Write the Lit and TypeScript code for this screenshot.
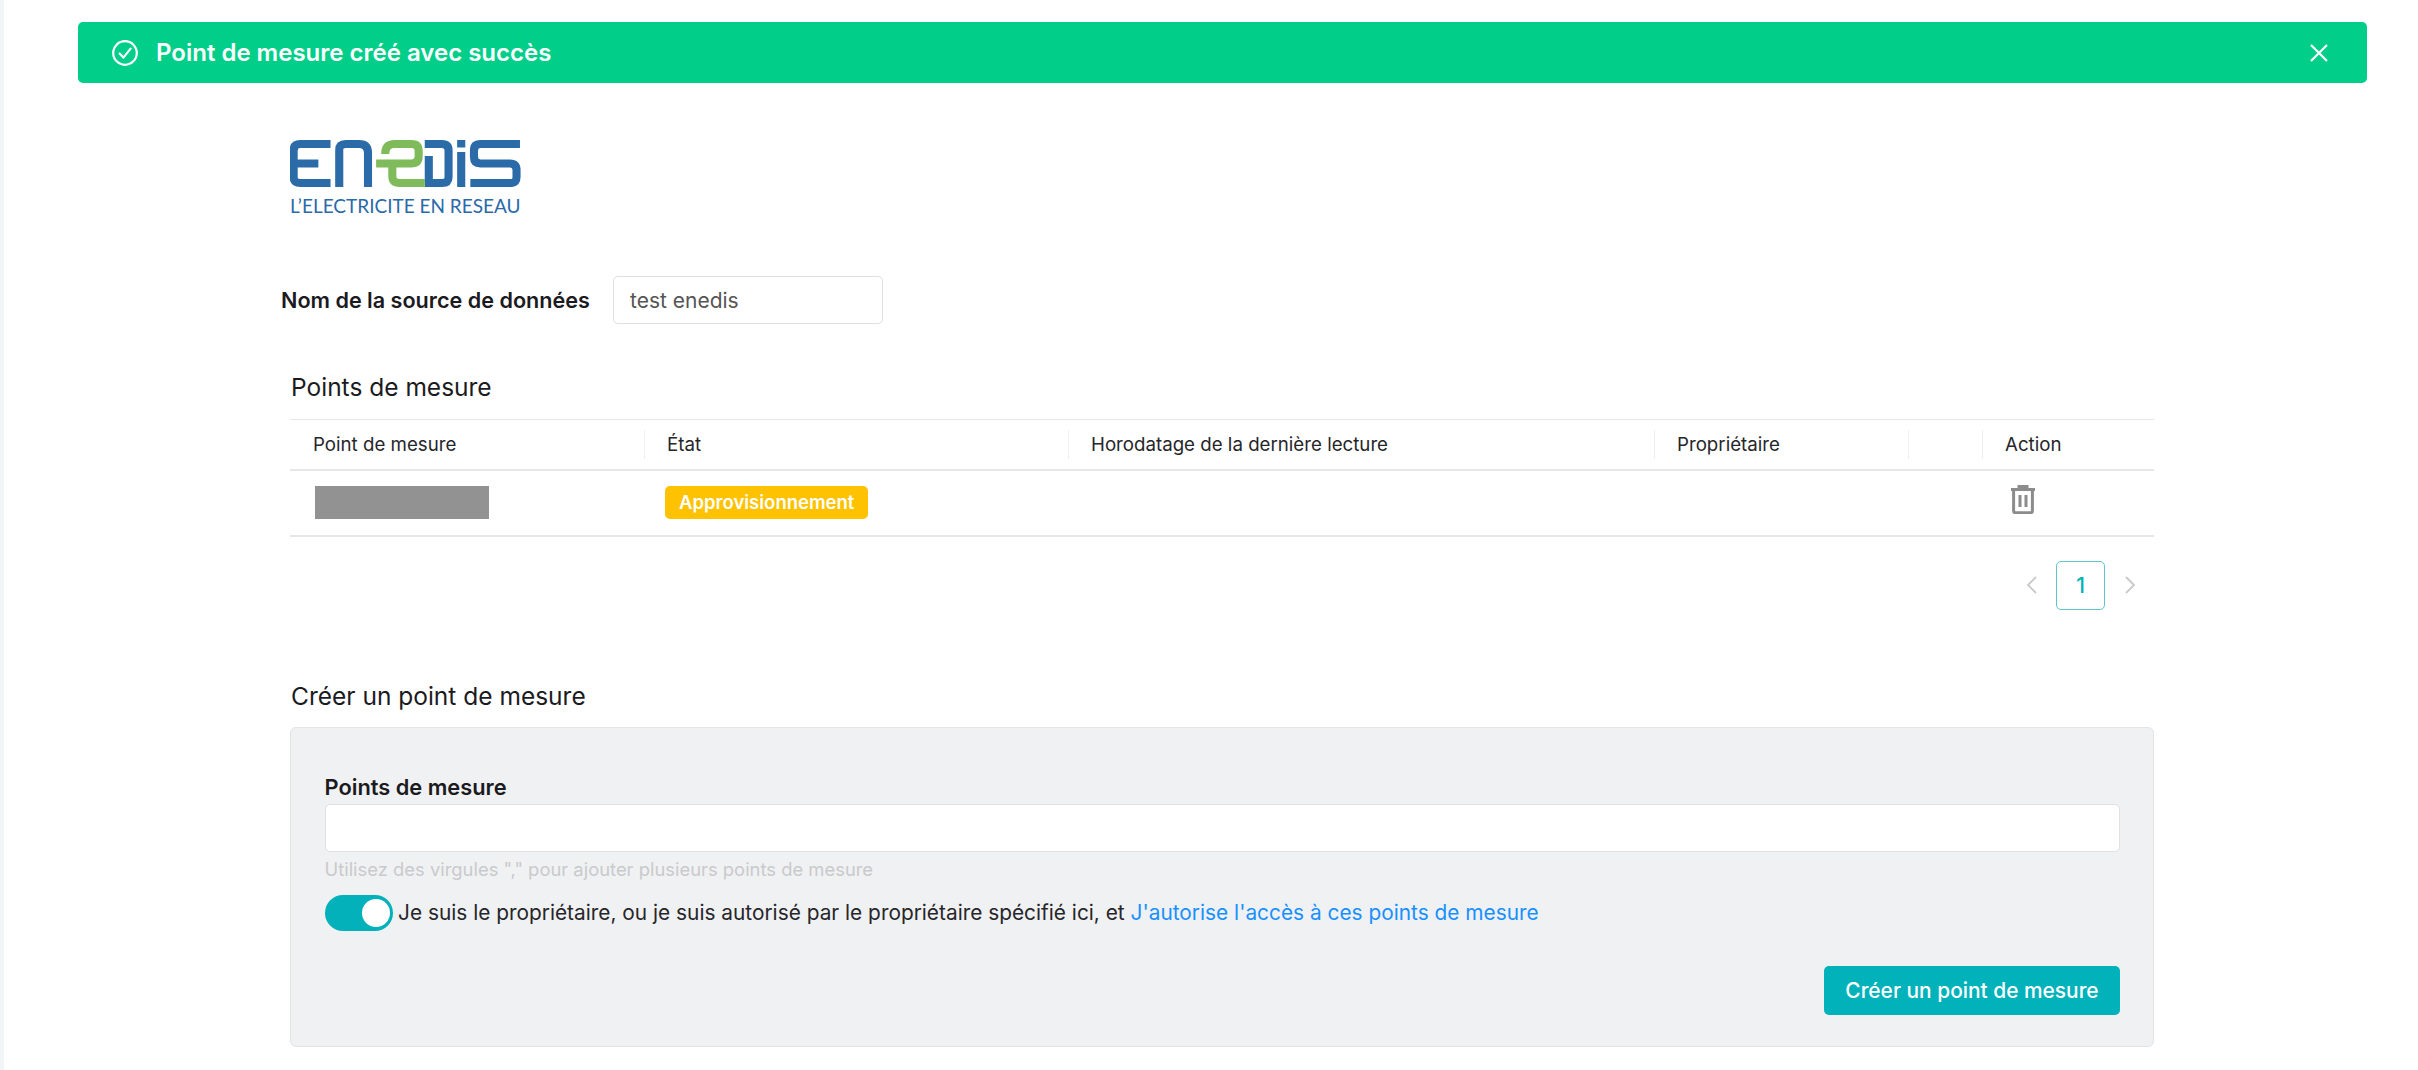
import { LitElement, html, css } from "lit";
import { customElement } from "lit/decorators.js";

const COLS = [354, 424, 586, 254, 74, 172];

@customElement("app-root")
export class AppRoot extends LitElement {
  static styles = css`
    :host {
      display: block;
      width: 2418px;
      height: 1070px;
      overflow: hidden;
      background: #fff;
      font-family: Inter, "Liberation Sans", sans-serif;
      color: #1b1b1f;
      box-sizing: border-box;
      border-left: 4px solid #f3f4f6;
    }
    .banner {
      margin: 22px 51px 0 74px;
      height: 61px;
      box-sizing: border-box;
      background: #00ce89;
      border-radius: 5px;
      display: flex;
      align-items: center;
      padding: 0 39px 0 34px;
      color: #fff;
      font-size: 24px;
      font-weight: 600;
    }
    .banner .msg { margin-left: 18px; flex: 1; }
    .main { margin-left: 286px; width: 1864px; }
    .logo { margin-top: 57px; display: block; }
    .tagline {
      font-family: Lato, "Open Sans", sans-serif;
      font-size: 19px;
      line-height: 24px;
      color: #2a6aa9;
      margin-top: 7px;
      width: 232px;
      white-space: nowrap;
    }
    .source {
      display: flex;
      align-items: center;
      margin: 58px 0 0 -9px;
    }
    .source label { font-size: 21.6px; font-weight: 600; white-space: nowrap; width: 332px; }
    .field {
      box-sizing: border-box;
      background: #fff;
      border: 1px solid #e0e1e4;
      border-radius: 5px;
      height: 48px;
      font-size: 21px;
      color: #555;
      display: flex;
      align-items: center;
      padding: 0 16px;
    }
    .source .field { width: 270px; }
    h2 {
      font-size: 24.5px;
      font-weight: 400;
      margin: 0;
      padding-left: 1px;
      line-height: 30px;
    }
    .h-points { margin-top: 48px; }
    table {
      margin-top: 17px;
      width: 100%;
      table-layout: fixed;
      border-collapse: collapse;
      font-size: 18.7px;
    }
    thead tr { height: 50px; }
    thead { border-top: 1px solid #e6e7e9; border-bottom: 2px solid #e6e7e9; }
    th {
      font-weight: 400;
      text-align: left;
      padding: 0 0 0 23px;
      position: relative;
      color: #26262a;
    }
    th:not(:first-child)::before {
      content: "";
      position: absolute;
      left: 0;
      top: 10px;
      bottom: 10px;
      width: 1px;
      background: #eeeff1;
    }
    tbody tr { height: 66px; border-bottom: 2px solid #e6e7e9; }
    td { padding: 0 0 0 23px; vertical-align: middle; }
    td.state { padding-left: 21px; }
    .redact { width: 174px; height: 33px; background: #929292; margin-left: 2px; margin-top: -1px; }
    .tag {
      display: inline-flex;
      align-items: center;
      height: 33px;
      padding: 0 14px;
      box-sizing: border-box;
      border-radius: 5px;
      background: #ffc200;
      color: #fff;
      font-weight: 600;
      font-size: 18.5px;
      margin-top: -1px;
      vertical-align: middle;
    }
    .trash { display: block; margin: -6px 0 0 5px; }
    .pager {
      display: flex;
      justify-content: flex-end;
      align-items: center;
      margin-top: 24px;
      padding-right: 18.5px;
    }
    .page {
      box-sizing: border-box;
      width: 49px;
      height: 49px;
      border: 1.5px solid #5ec6cc;
      border-radius: 5px;
      color: #03b1ba;
      font-size: 21px;
      font-weight: 500;
      display: flex;
      align-items: center;
      justify-content: center;
      margin: 0 19.5px;
    }
    .h-create { margin-top: 71px; }
    .panel {
      margin-top: 16px;
      height: 320px;
      box-sizing: border-box;
      background: #f0f1f3;
      border: 1.5px solid #e3e4e6;
      border-radius: 6px;
      padding: 44.5px 33px 0 33.5px;
      display: flex;
      flex-direction: column;
    }
    .panel label { font-size: 21.8px; font-weight: 600; line-height: 30px; margin-bottom: 1.5px; }
    .hint { color: #c9cacc; font-size: 18.4px; line-height: 24px; margin-top: 5px; }
    .consent {
      display: flex;
      align-items: center;
      margin-top: 14px;
      font-size: 20.85px;
      color: #26262a;
    }
    .toggle {
      box-sizing: border-box;
      width: 68px;
      height: 36px;
      border-radius: 18px;
      background: #02b1b9;
      display: flex;
      justify-content: flex-end;
      align-items: center;
      padding-right: 3px;
      margin-right: 5.5px;
    }
    .knob { width: 28px; height: 28px; border-radius: 50%; background: #fff; }
    a { color: #1890ff; text-decoration: none; }
    .actions { display: flex; justify-content: flex-end; margin-top: 35px; }
    button {
      font-family: inherit;
      height: 49px;
      width: 296px;
      border: none;
      border-radius: 5px;
      background: #02b2ba;
      color: #fff;
      font-size: 20.9px;
      font-weight: 500;
      padding: 0;
    }
  `;

  render() {
    return html`
      <div class="banner">
        <svg width="26" height="26" viewBox="0 0 26 26" fill="none" stroke="#fff" stroke-width="2.2">
          <circle cx="13" cy="13" r="11.8"></circle>
          <path d="M7.6 13.6l3.8 4 7.2-9" stroke-linecap="round" stroke-linejoin="round"></path>
        </svg>
        <span class="msg">Point de mesure créé avec succès</span>
        <svg width="18" height="18" viewBox="0 0 18 18" fill="none" stroke="#fff" stroke-width="2.2">
          <path d="M1 1l16 16M17 1L1 17"></path>
        </svg>
      </div>
      <div class="main">
        <svg class="logo" width="232" height="47" viewBox="290 140 229 47" preserveAspectRatio="none" fill="none" stroke-width="8">
          <g stroke="#2b6ca8">
            <path d="M330 144H300q-6.4 0-6.4 6.4v26.6q0 6 6.4 6h30"></path>
            <path d="M293.6 163.5H318"></path>
            <path d="M338.6 187V150q0-6 6.4-6h13q9 0 9 9V187"></path>
            <path d="M423 144h17q6.5 0 6.5 6.5v26.5q0 6-6.4 6H423"></path>
            <path d="M427 156v27"></path>
            <path d="M459 140v7.6M459 152v35"></path>
            <path d="M517 144h-39q-6.4 0-6.4 6.4v6.7q0 6.4 6.4 6.4h29q6.6 0 6.6 6.6v7q0 6-6.4 6H468"></path>
          </g>
          <g stroke="#7fbb5b">
            <path d="M384 154q0-10 9.4-10H410q7 0 7 7v5q0 7.5-7.5 7.5H375"></path>
            <path d="M391 163.5V176q0 7 7.4 7H423"></path>
          </g>
        </svg>
        <div class="tagline">L’ELECTRICITE EN RESEAU</div>
        <div class="source">
          <label>Nom de la source de données</label>
          <div class="field">test enedis</div>
        </div>
        <h2 class="h-points">Points de mesure</h2>
        <table>
          <colgroup>${COLS.map((w) => html`<col style="width:${w}px" />`)}</colgroup>
          <thead>
            <tr>
              <th>Point de mesure</th>
              <th>État</th>
              <th>Horodatage de la dernière lecture</th>
              <th>Propriétaire</th>
              <th></th>
              <th>Action</th>
            </tr>
          </thead>
          <tbody>
            <tr>
              <td><div class="redact"></div></td>
              <td class="state"><span class="tag">Approvisionnement</span></td>
              <td></td>
              <td></td>
              <td></td>
              <td>
                <svg class="trash" width="26" height="29" viewBox="0 0 26 29" fill="none" stroke="#8c8c8c" stroke-width="3">
                  <path d="M1 4.4h24M9 3.6V1.4h8v2.2"></path>
                  <path d="M3.6 4.6v21.2q0 2 2 2h14.8q2 0 2-2V4.6"></path>
                  <path d="M10 10v12M16 10v12"></path>
                </svg>
              </td>
            </tr>
          </tbody>
        </table>
        <div class="pager">
          <svg width="11" height="18" viewBox="0 0 11 18" fill="none" stroke="#c9c9c9" stroke-width="1.8"><path d="M10 1L2 9l8 8"></path></svg>
          <div class="page">1</div>
          <svg width="11" height="18" viewBox="0 0 11 18" fill="none" stroke="#c9c9c9" stroke-width="1.8"><path d="M1 1l8 8-8 8"></path></svg>
        </div>
        <h2 class="h-create">Créer un point de mesure</h2>
        <div class="panel">
          <label>Points de mesure</label>
          <div class="field"></div>
          <div class="hint">Utilisez des virgules "," pour ajouter plusieurs points de mesure</div>
          <div class="consent">
            <div class="toggle"><div class="knob"></div></div>
            <span>Je suis le propriétaire, ou je suis autorisé par le propriétaire spécifié ici, et <a>J'autorise l'accès à ces points de mesure</a></span>
          </div>
          <div class="actions"><button>Créer un point de mesure</button></div>
        </div>
      </div>
    `;
  }
}
